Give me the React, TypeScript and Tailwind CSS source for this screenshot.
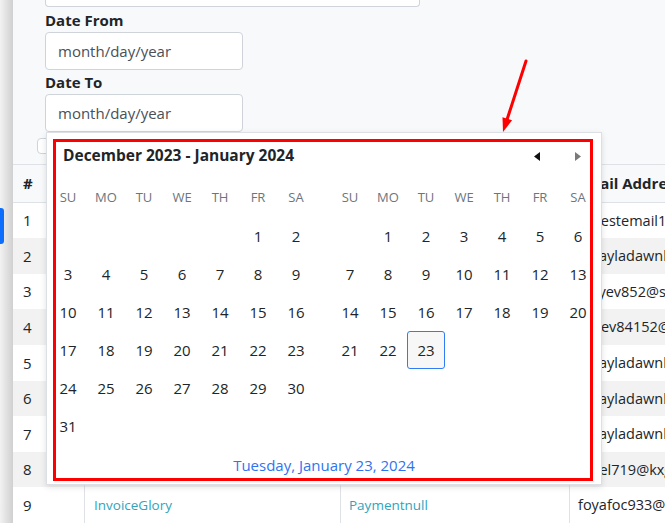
import React from "react";

const DAY_NAMES = ["SU", "MO", "TU", "WE", "TH", "FR", "SA"];

function cells(start: number, shown: number): (number | null)[] {
  const out: (number | null)[] = [];
  for (let i = 0; i < 42; i++) {
    const d = i - start + 1;
    out.push(d >= 1 && d <= shown ? d : null);
  }
  return out;
}

function Month({ start, shown, selected }: { start: number; shown: number; selected?: number }) {
  return (
    <div className="grid grid-cols-[repeat(7,38px)] auto-rows-[38px]">
      {DAY_NAMES.map((n) => (
        <div key={n} className="flex items-center justify-center text-[13px] text-[#6c757d]">
          {n}
        </div>
      ))}
      {cells(start, shown).map((d, i) =>
        d === null ? (
          <div key={i} />
        ) : d === selected ? (
          <div
            key={i}
            className="flex items-center justify-center text-[15px] text-[#212529] border border-[#2f7cf6] rounded-[3px] bg-[#f7f7f7]"
          >
            {d}
          </div>
        ) : (
          <div key={i} className="flex items-center justify-center text-[15px] text-[#212529]">
            {d}
          </div>
        )
      )}
    </div>
  );
}

const ROWS: { n: number; a: string; b: string; email: string }[] = [
  { n: 1, a: "InvoiceGlory", b: "Paymentnull", email: "ontestemail1@gmail.com" },
  { n: 2, a: "InvoiceGlory", b: "Paymentnull", email: "mkayladawnload@gmail.com" },
  { n: 3, a: "InvoiceGlory", b: "Paymentnull", email: "gulyev852@socmail.com" },
  { n: 4, a: "InvoiceGlory", b: "Paymentnull", email: "kayev84152@web.de" },
  { n: 5, a: "InvoiceGlory", b: "Paymentnull", email: "mkayladawnload@gmail.com" },
  { n: 6, a: "InvoiceGlory", b: "Paymentnull", email: "mkayladawnload@gmail.com" },
  { n: 7, a: "InvoiceGlory", b: "Paymentnull", email: "mkayladawnload@gmail.com" },
  { n: 8, a: "InvoiceGlory", b: "Paymentnull", email: "mael719@kxgmail.com" },
  { n: 9, a: "InvoiceGlory", b: "Paymentnull", email: "foyafoc933@wetmail.com" },
];

export default function App() {
  return (
    <div className="relative w-[665px] h-[523px] overflow-hidden bg-[#f8f9fa] flex font-['Open_Sans','Noto_Sans',sans-serif] text-[#212529]">
      {/* sidebar edge */}
      <div className="w-[13px] shrink-0 bg-gradient-to-r from-[#f2f2f2] to-[#d0d0d0] flex flex-col">
        <div className="mt-[208px] h-[36px] w-[4px] bg-[#0d6efd] rounded-r-[3px]" />
      </div>

      {/* main */}
      <div className="flex-1 flex flex-col min-w-0">
        <div className="ml-[32px] w-[375px] h-[7px] bg-white border border-t-0 border-[#ced4da] rounded-b-[4px]" />
        <div className="ml-[32px] mt-[2px] h-[22px] flex items-center text-[15px] font-bold">Date From</div>
        <div className="ml-[32px] mt-[1px] w-[198px] h-[38px] bg-white border border-[#ced4da] rounded-[4px] flex items-center pl-[12px] text-[15px] text-[#495057]">
          month/day/year
        </div>
        <div className="ml-[32px] mt-[1px] h-[22px] flex items-center text-[15px] font-bold">Date To</div>
        <div className="ml-[32px] mt-[1px] w-[198px] h-[38px] bg-white border border-[#ced4da] rounded-[4px] flex items-center pl-[12px] text-[15px] text-[#495057]">
          month/day/year
        </div>
        <div className="ml-[24px] mt-[6px] w-[40px] h-[16px] bg-white border border-[#ced4da] rounded-[4px]" />

        {/* table */}
        <div className="mt-[10px] w-[900px] text-[15px]">
          <div className="flex h-[39px] items-center border-y border-[#dee2e6] bg-[#f8f9fa] font-bold">
            <div className="w-[71px] shrink-0 pl-[10px]">#</div>
            <div className="w-[256px] shrink-0 pl-[9px]">Invoice Name</div>
            <div className="w-[229px] shrink-0 pl-[8px]">Payment</div>
            <div className="flex-1 pl-[8px] whitespace-nowrap">Email Address</div>
          </div>
          {ROWS.map((r) => (
            <div
              key={r.n}
              className={`flex h-[35.6px] items-stretch ${r.n % 2 === 0 ? "bg-[#f2f2f2]" : "bg-white"}`}
            >
              <div className="w-[71px] shrink-0 pl-[10px] flex items-center">{r.n}</div>
              <div className="w-[256px] shrink-0 pl-[9px] flex items-center border-l border-[#dee2e6] text-[13.5px] text-[#30a4bc]">
                {r.a}
              </div>
              <div className="w-[229px] shrink-0 pl-[8px] flex items-center border-l border-[#dee2e6] text-[13.5px] text-[#30a4bc]">
                {r.b}
              </div>
              <div className="flex-1 pl-[8px] flex items-center border-l border-[#dee2e6] whitespace-nowrap text-[14.5px]">
                {r.email}
              </div>
            </div>
          ))}
        </div>
      </div>

      {/* datepicker popup */}
      <div className="absolute left-[46px] top-[132px] w-[556px] h-[353px] bg-white border border-[#dcdfe3] shadow-[0_2px_6px_rgba(0,0,0,0.12)] flex flex-col">
        <div className="flex items-center h-[24px] mt-[11px] pl-[16px]">
          <span className="font-bold text-[15.5px] text-[#212529]">December 2023 - January 2024</span>
          <div className="ml-auto flex items-center gap-[35px] pr-[20px]">
            <svg width="6" height="9" viewBox="0 0 6 9">
              <path d="M6 0 L0 4.5 L6 9 Z" fill="#111" />
            </svg>
            <svg width="6" height="9" viewBox="0 0 6 9">
              <path d="M0 0 L6 4.5 L0 9 Z" fill="#7a7a7a" />
            </svg>
          </div>
        </div>
        <div className="flex mt-[11px] pl-[2px] gap-[16px]">
          <Month start={5} shown={31} />
          <Month start={1} shown={23} selected={23} />
        </div>
        <div className="mt-[8px] h-[24px] flex items-center justify-center text-[15px] text-[#2d74f0]">
          Tuesday, January 23, 2024
        </div>
      </div>

      {/* red annotation rectangle */}
      <div className="absolute left-[53px] top-[139px] w-[540px] h-[342px] border-[3px] border-[#ff0000] pointer-events-none" />

      {/* red arrow */}
      <svg className="absolute left-[495px] top-[55px]" width="40" height="82" viewBox="0 0 40 82">
        <line x1="31" y1="6" x2="12.3" y2="63.7" stroke="#ff0000" strokeWidth="3" strokeLinecap="round" />
        <path d="M8 77 L17.1 65.2 L7.5 62.2 Z" fill="#ff0000" />
      </svg>
    </div>
  );
}
